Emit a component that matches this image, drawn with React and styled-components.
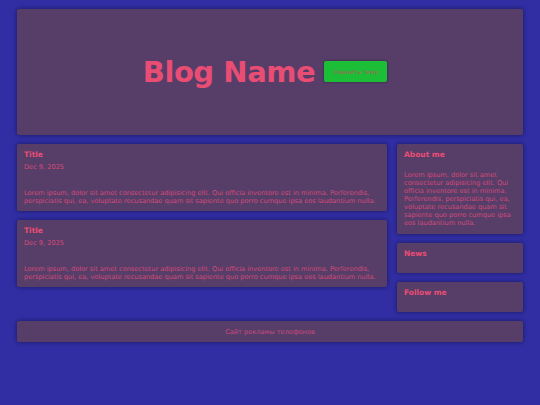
import React from "react";
import styled, { createGlobalStyle } from "styled-components";

const GlobalStyle = createGlobalStyle`
  * { box-sizing: border-box; }
  body {
    margin: 0;
    background: #302ea2;
    font-family: "DejaVu Sans", "Noto Sans", sans-serif;
    color: #e94c72;
  }
`;

const Page = styled.div`
  padding: 9px 17px 9px 17px;
  display: flex;
  flex-direction: column;
  gap: 9px;
`;

const Card = styled.div`
  background: #573e69;
  border-radius: 2px;
  box-shadow: 0 0 4px rgba(10, 5, 40, 0.55);
  padding: ${(p) => p.$pad || "6px 7px"};
`;

const Header = styled(Card)`
  height: 126px;
  display: flex;
  align-items: center;
  justify-content: center;
  gap: 9px;
`;

const BlogName = styled.h1`
  margin: 0;
  font-weight: 700;
  font-size: 29px;
  letter-spacing: -0.45px;
  color: #ea4d74;
`;

const ThemeButton = styled.button`
  width: 63px;
  height: 21px;
  background: #1dbe37;
  border: none;
  border-radius: 2px;
  box-shadow: 0 0 3px rgba(0, 0, 0, 0.45);
  color: #a8605a;
  font-family: "DejaVu Sans", sans-serif;
  font-size: 6px;
  padding: 0;
  margin: -2px 10px 0 0;
`;

const Main = styled.div`
  display: grid;
  grid-template-columns: 370px 126px;
  gap: 10px;
  align-items: start;
`;

const Column = styled.div`
  display: flex;
  flex-direction: column;
  gap: 9px;
`;

const Title = styled.h3`
  margin: 0;
  font-size: 7.5px;
  line-height: 10px;
  font-weight: 700;
  color: #ea4d74;
`;

const DateLine = styled.div`
  margin-top: 3px;
  font-size: 6.6px;
  line-height: 9px;
  color: #d44a77;
`;

const Body = styled.p`
  margin: ${(p) => p.$top || "17px"} 0 0;
  font-size: 6.6px;
  line-height: 8px;
  color: #d24a78;
`;

const Footer = styled(Card)`
  height: 21px;
  display: flex;
  align-items: center;
  justify-content: center;
  font-size: 6.6px;
  color: #c9497a;
`;

const lorem =
  "Lorem ipsum, dolor sit amet consectetur adipisicing elit. Qui officia inventore est in minima. Perferendis, perspiciatis qui, ea, voluptate recusandae quam sit sapiente quo porro cumque ipsa eos laudantium nulla.";

const Post = () => (
  <Card $pad="6px 7px 6px">
    <Title>Title</Title>
    <DateLine>Dec 9, 2025</DateLine>
    <Body>{lorem}</Body>
  </Card>
);

export default function App() {
  return (
    <>
      <GlobalStyle />
      <Page>
        <Header>
          <BlogName>Blog Name</BlogName>
          <ThemeButton>Сменить тему</ThemeButton>
        </Header>
        <Main>
          <Column>
            <Post />
            <Post />
          </Column>
          <Column>
            <Card $pad="6px 7px 7px">
              <Title>About me</Title>
              <Body $top="11px">{lorem}</Body>
            </Card>
            <Card $pad="6px 7px 14px">
              <Title>News</Title>
            </Card>
            <Card $pad="6px 7px 14px">
              <Title>Follow me</Title>
            </Card>
          </Column>
        </Main>
        <Footer>Сайт рекламы телефонов</Footer>
      </Page>
    </>
  );
}
